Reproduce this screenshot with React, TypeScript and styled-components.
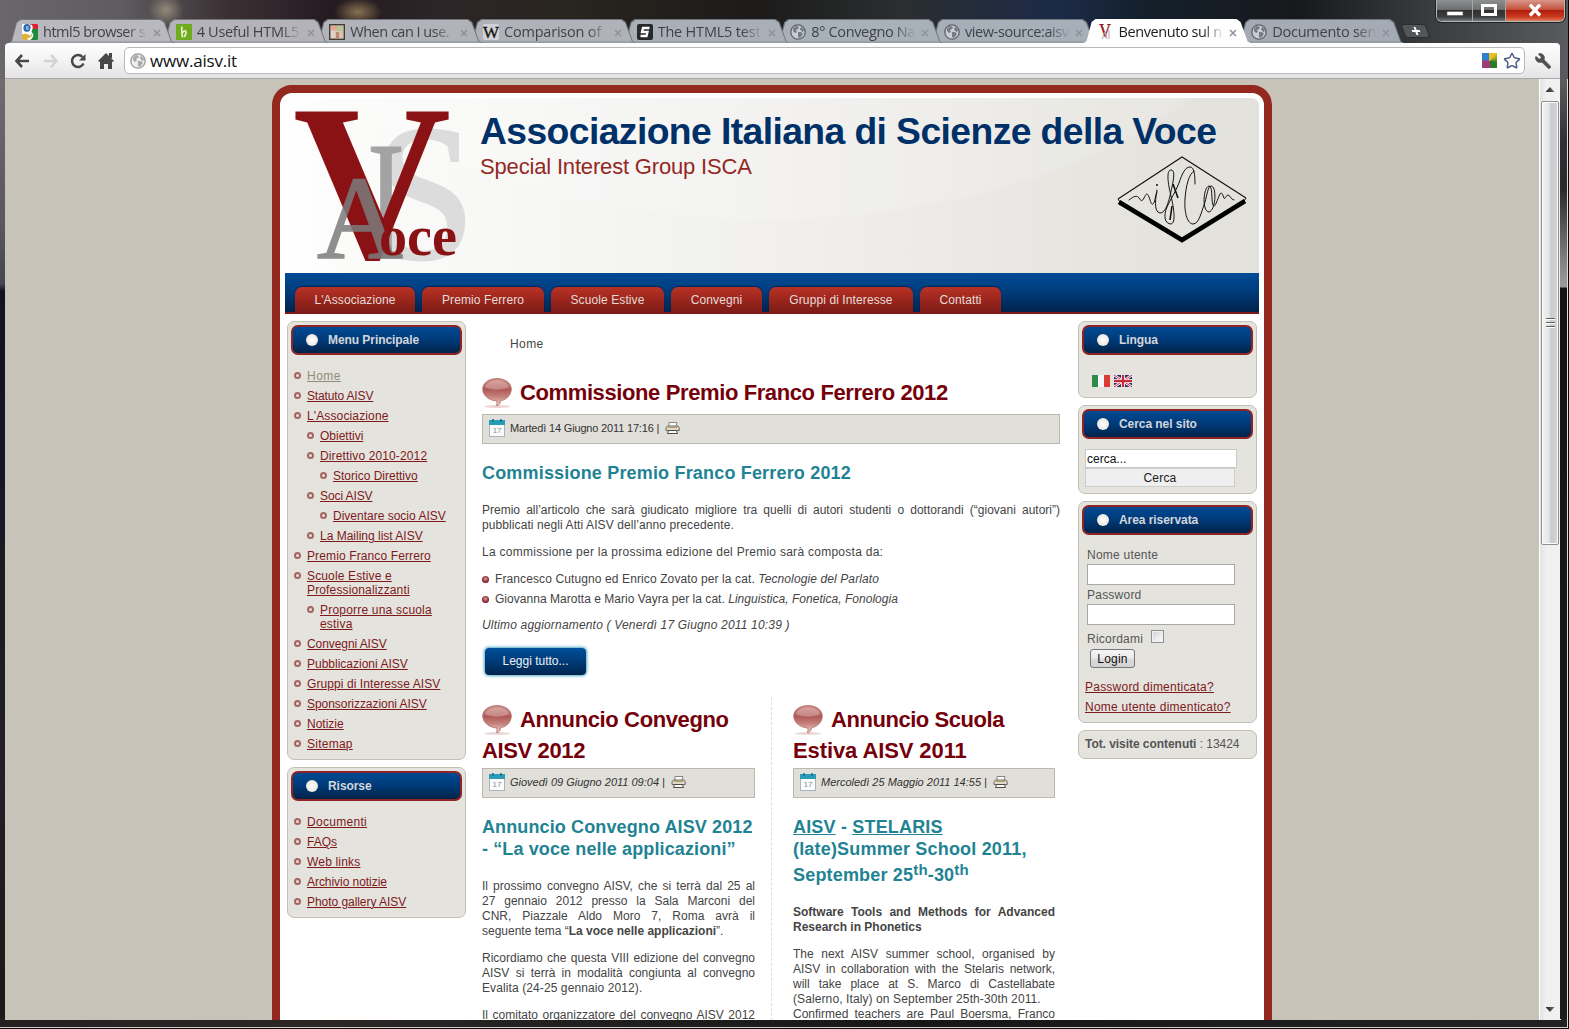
import React from "react";
import styled, { createGlobalStyle, css } from "styled-components";
import { Star, Wrench } from "lucide-react";

const Global = createGlobalStyle`
  *, *::before { box-sizing: border-box; }
  html, body { margin: 0; padding: 0; background: #000; overflow: hidden; }
  h1, h2, h3, p, ul { margin: 0; padding: 0; font-weight: inherit; }
  ul { list-style: none; }
  a { color: inherit; }
`;

const sans = `"Liberation Sans", Arial, sans-serif`;
const ui = `"Open Sans", "Noto Sans", sans-serif`;

/* ---------- browser window ---------- */

const Window = styled.div`
  position: relative;
  width: 1569px;
  height: 1029px;
  overflow: hidden;
  display: flex;
  flex-direction: column;
  font-family: ${sans};
  border: 1px solid #0a0a0a;
  border-width: 0 1px 1px 0;
  background:
    radial-gradient(ellipse 18px 16px at 166px 10px, rgba(190, 180, 150, 0.6), transparent),
    radial-gradient(ellipse 24px 14px at 358px 12px, rgba(200, 170, 110, 0.6), transparent),
    linear-gradient(90deg, #6a666a 0, #5f5b5f 120px, #3a3034 230px, #251a20 330px, #2c2528 440px, #29251f 560px, #1c1b1a 760px, #2a2e30 900px, #1c2a48 1060px, #14202c 1140px, #17191c 1300px, #3a3c3f 1430px, #5a5b5e 1569px);
`;

const TabStrip = styled.div`
  height: 43px;
  display: flex;
  align-items: flex-end;
  padding-left: 8px;
`;

const tabShape = css`
  clip-path: polygon(0 100%, 3px 92%, 8px 12%, 12px 0, calc(100% - 14px) 0, calc(100% - 10px) 12%, calc(100% - 3px) 94%, 100% 100%);
`;

const TabEdge = styled.div<{ $active?: boolean; $order: number }>`
  position: relative;
  z-index: ${(p) => (p.$active ? 30 : 20 - p.$order)};
  width: 167px;
  height: 24px;
  margin-right: -13.35px;
  flex: none;
  padding: 1px 1px 0;
  background: ${(p) => (p.$active ? "#fff" : "#70757b")};
  ${tabShape}
`;

const TabFace = styled.div<{ $active?: boolean; $tone: string }>`
  height: 100%;
  display: flex;
  align-items: center;
  padding: 0 11px 0 13px;
  background: ${(p) => (p.$active ? "linear-gradient(#fff, #fdfdfd)" : `linear-gradient(${p.$tone}, ${p.$tone} 88%, #90969d)`)};
  ${tabShape}
`;

const TabTitle = styled.span<{ $active?: boolean; $ls: number }>`
  flex: 1;
  margin-left: 5px;
  overflow: hidden;
  white-space: nowrap;
  font: 14.5px/20px ${ui};
  letter-spacing: ${(p) => p.$ls}px;
  color: ${(p) => (p.$active ? "#1c1c1c" : "#3f4347")};
  mask-image: linear-gradient(90deg, #000 80%, transparent 100%);
`;

const TabClose = styled.svg`
  flex: none;
  margin: 3px 2px 0 5px;
`;

const NewTab = styled.div`
  align-self: flex-end;
  margin: 0 0 5px 12px;
  width: 25px;
  height: 14px;
  transform: skewX(20deg);
  border-radius: 3px;
  background: #54575a;
  border: 1px solid #2a2c2e;
  display: flex;
  align-items: center;
  justify-content: center;
`;

const WindowButtons = styled.div`
  position: absolute;
  z-index: 40;
  top: 0;
  right: 3px;
  height: 22px;
  display: flex;
  border: 1px solid #b5b7b9;
  border-top: 0;
  border-radius: 0 0 6px 6px;
  overflow: hidden;
  box-shadow: 0 0 0 1px #222;
`;

const WinButton = styled.div<{ $w: number; $close?: boolean }>`
  width: ${(p) => p.$w}px;
  display: flex;
  align-items: center;
  justify-content: center;
  border-right: ${(p) => (p.$close ? "0" : "1px solid #a5a7a9")};
  background: ${(p) =>
    p.$close
      ? "linear-gradient(#d9968a, #c4523e 45%, #b01e0c 50%, #c93a1f 80%, #e08060)"
      : "linear-gradient(#8d8f91, #6d6f71 45%, #2f3133 50%, #3b3d3f 80%, #77797b)"};
`;

const Toolbar = styled.div`
  position: relative;
  z-index: 31;
  height: 36px;
  margin: 0 8px 0 5px;
  flex: none;
  display: flex;
  align-items: center;
  border-radius: 4px 4px 0 0;
  border-bottom: 1px solid #a9a9a9;
  background: linear-gradient(#fefefe, #f3f3f3 50%, #e4e4e4);
`;

const ToolIcon = styled.svg<{ $ml: number }>`
  margin-left: ${(p) => p.$ml}px;
  flex: none;
`;

const WrenchIcon = styled(Wrench)`
  flex: none;
  margin-left: 9px;
  transform: scaleX(-1);
`;

const Omnibox = styled.div`
  margin-left: 10px;
  width: 1401px;
  height: 27px;
  display: flex;
  align-items: center;
  padding: 0 3px 0 5px;
  background: #fff;
  border: 1px solid #b9b9b9;
  border-radius: 5px;
`;

const Url = styled.span`
  flex: 1;
  margin-left: 4px;
  font: 17px/22px ${ui};
  letter-spacing: -0.2px;
  color: #111;
`;

const Multicolor = styled.div`
  width: 15px;
  height: 15px;
  margin-right: 6px;
  background: conic-gradient(#e8c020 0 12%, #2f7a2a 30% 50%, #a03a78 50% 72%, #2f7fd0 78%);
`;

const Frame = styled.div`
  flex: 1;
  min-height: 0;
  display: flex;
  padding: 0 8px 8px 5px;
  background:
    linear-gradient(#eee, #eee) 5px calc(100% - 8px) / 1556px 1px no-repeat,
    linear-gradient(#cfcfcf, #cfcfcf) 0 calc(100% - 0px) / 100% 1px no-repeat,
    linear-gradient(90deg, transparent 1567px, #ddd 0),
    linear-gradient(90deg, #24201f, #2a2725 20%, #171717 60%, #222) 0 100% / 100% 9px no-repeat,
    linear-gradient(#5c5e60 0, #303234 60px, #2a2a2a 110px, #8b8b8b 190px, #9c9c9c 208px, #141414 209px, #1c1c1c) 100% 0 / 8px 100% no-repeat,
    linear-gradient(#6f6b6f, #59565c 150px, #454551 205px, #10131f 212px, #151824 400px, #231f24 700px, #1a1818) 0 0 / 5px 100% no-repeat;
`;

const Viewport = styled.div`
  flex: 1;
  min-width: 0;
  overflow: hidden;
  display: flex;
  justify-content: flex-start;
  align-items: flex-start;
  background: #c7c3b8;
`;

const Scrollbar = styled.div`
  width: 21px;
  display: flex;
  flex-direction: column;
  align-items: center;
  justify-content: space-between;
  padding-bottom: 8px;
  border-left: 1px solid #fff;
  background: linear-gradient(90deg, #e3e3e3, #f0f0f0 30%, #f1f1f1);
`;

const ScrollTop = styled.div`
  display: flex;
  flex-direction: column;
  align-items: center;
`;

const Arrow = styled.div<{ $down?: boolean }>`
  width: 9px;
  height: 5px;
  margin-top: ${(p) => (p.$down ? 0 : 8)}px;
  margin-bottom: ${(p) => (p.$down ? 0 : 9)}px;
  background: linear-gradient(90deg, #222, #777);
  clip-path: ${(p) => (p.$down ? "polygon(0 0, 100% 0, 50% 100%)" : "polygon(0 100%, 100% 100%, 50% 0)")};
`;

const Thumb = styled.div`
  width: 18px;
  height: 444px;
  display: flex;
  flex-direction: column;
  align-items: center;
  justify-content: center;
  gap: 2px;
  border: 1px solid #909090;
  border-radius: 2px;
  background: linear-gradient(90deg, #f4f4f4, #e4e4e6 45%, #c9cacd 55%, #d6d7da);
  box-shadow: inset 0 0 0 1px #fafafa;
`;

const Grip = styled.i`
  width: 9px;
  height: 2px;
  border-top: 1px solid #606060;
  border-bottom: 1px solid #fff;
`;

/* ---------- page ---------- */

const Page = styled.div`
  flex: none;
  width: 1000px;
  height: 1400px;
  margin: 6px 0 0 267px;
  padding: 5px 5px 0;
  background: #fff;
  border: 8px solid #93281f;
  border-radius: 20px;
  color: #444;
  font-size: 12px;
`;

const Header = styled.header`
  width: 974px;
  height: 175px;
  display: flex;
  border-radius: 6px 8px 0 0;
  background:
    radial-gradient(ellipse 551px 325px at 480px -200px, rgba(255, 255, 255, 0.14) 98%, transparent 100%),
    linear-gradient(90deg, #fff 0, #fbfbfa 60px, #f8f8f7 200px, #f0efed 520px, #e6e5e0 800px, #e2e1dc);
`;

const HeaderLogo = styled.svg`
  flex: none;
  width: 195px;
  height: 175px;
`;

const HeaderText = styled.div`
  flex: 1;
  position: relative;
  white-space: nowrap;
  padding-top: 11px;
`;

const SiteTitle = styled.h1`
  font: bold 37.3px/44px ${sans};
  letter-spacing: -0.6px;
  color: #003068;
`;

const SiteSub = styled.p`
  margin-top: 1px;
  font: 22px/26px ${sans};
  letter-spacing: -0.17px;
  color: #93281f;
`;

const IscaLogo = styled.svg`
  position: absolute;
  left: 636px;
  top: 56px;
  width: 132px;
  height: 92px;
`;

const Nav = styled.nav`
  width: 974px;
  height: 41px;
  display: flex;
  align-items: flex-end;
  gap: 7px;
  padding-left: 10px;
  border-bottom: 2px solid #7d1c17;
  background: linear-gradient(#004b97, #003f80 40%, #00234c);
`;

const NavTab = styled.a<{ $w: number }>`
  width: ${(p) => p.$w}px;
  height: 25px;
  border-radius: 7px 7px 0 0;
  background: linear-gradient(#b83226, #9c261d 50%, #7d1c17);
  box-shadow: 0 -1px 1px rgba(0, 20, 60, 0.6);
  color: #e4dcd8;
  text-align: center;
  font: 12px/26px ${sans};
  letter-spacing: 0.1px;
`;

const Columns = styled.div`
  display: flex;
  align-items: flex-start;
  padding: 7px 2px 0;
`;

const SideCol = styled.aside`
  width: 179px;
  flex: none;
  display: flex;
  flex-direction: column;
  gap: 7px;
`;

const Panel = styled.section<{ $h: number }>`
  height: ${(p) => p.$h}px;
  padding: 3px 3px 0;
  border: 1px solid #c3c1b2;
  border-radius: 7px;
  background: #e4e3de;
`;

const PanelHead = styled.h3`
  height: 30px;
  display: flex;
  align-items: center;
  gap: 10px;
  padding-left: 13px;
  border: 2px solid #8e2524;
  border-radius: 7px;
  background: linear-gradient(#004a93, #003a78 50%, #002348);
  color: #d3d6db;
  font: bold 12px/24px ${sans};
  letter-spacing: -0.06px;
  &::before {
    content: "";
    width: 12px;
    height: 12px;
    border-radius: 50%;
    background: radial-gradient(#fff, #efece6 60%, #c0c6cc);
  }
`;

const MenuList = styled.ul`
  padding-top: 11px;
`;

const MenuItem = styled.li<{ $level: number; $muted?: boolean }>`
  display: flex;
  align-items: flex-start;
  padding: 3px 0 3px ${(p) => 3 + p.$level * 13}px;
  color: ${(p) => (p.$muted ? "#8d8d77" : "#7e1a1a")};
  font: 12px/14px ${sans};
  white-space: nowrap;
  &::before {
    content: "";
    flex: none;
    width: 7px;
    height: 7px;
    margin: 3px 6px 0 0;
    border: 2px solid #a4645f;
    border-radius: 50%;
    background: #e9dedb;
  }
`;

const MenuLink = styled.a<{ $ls: number }>`
  letter-spacing: ${(p) => p.$ls}px;
  text-decoration: underline;
  text-decoration-thickness: 1px;
  text-underline-offset: 1px;
`;

const Main = styled.main`
  width: 578px;
  flex: none;
  margin: 0 18px 0 16px;
  font: 12px/15px ${sans};
`;

const Crumb = styled.div`
  padding: 16px 0 0 28px;
  letter-spacing: 0.4px;
`;

const ArticleTitle = styled.h2<{ $mt: number; $mb: number; $ls: number }>`
  margin: ${(p) => p.$mt}px 0 ${(p) => p.$mb}px;
  font: bold 22px/31px ${sans};
  letter-spacing: ${(p) => p.$ls}px;
  color: #75000a;
  white-space: nowrap;
`;

const TitleTail = styled.span<{ $ls: number }>`
  display: block;
  letter-spacing: ${(p) => p.$ls}px;
`;

const Balloon = styled.svg`
  width: 30px;
  height: 31px;
  margin-right: 8px;
  vertical-align: top;
`;

const Meta = styled.div<{ $italic?: boolean; $ls?: number }>`
  height: 30px;
  display: flex;
  align-items: center;
  padding: 0 0 2px 6px;
  border: 1px solid #bdb9ac;
  background: #e1dfd9;
  color: #333;
  font: ${(p) => (p.$italic ? "italic" : "normal")} 11px/26px ${sans};
  letter-spacing: ${(p) => p.$ls ?? 0}px;
  white-space: nowrap;
  svg { flex: none; }
`;

const MetaText = styled.span`
  margin: 0 6px 0 5px;
`;

const SubTitle = styled.h3<{ $mt: number; $ls?: number }>`
  margin: ${(p) => p.$mt}px 0 19px;
  font: bold 18px/22px ${sans};
  letter-spacing: ${(p) => p.$ls ?? 0.18}px;
  color: #1f8394;
  white-space: nowrap;
  sup { font-size: 15px; line-height: 1; vertical-align: 6px; }
`;

const RaisedLine = styled.span`
  display: block;
  padding-top: 2px;
`;

const Para = styled.p`
  margin-bottom: 12px;
`;

const Line = styled.span<{ $just?: boolean; $ls?: number }>`
  display: block;
  white-space: nowrap;
  text-align: left;
  letter-spacing: ${(p) => p.$ls ?? 0}px;
  ${(p) => p.$just && css`
    white-space: normal;
    text-align: justify;
    text-align-last: justify;
  `}
`;

const Bullets = styled.ul`
  margin: -3px 0 9px;
`;

const Bullet = styled.li<{ $ls: number }>`
  display: flex;
  align-items: center;
  height: 20px;
  white-space: nowrap;
  letter-spacing: ${(p) => p.$ls}px;
  &::before {
    content: "";
    width: 7px;
    height: 7px;
    margin-right: 6px;
    border-radius: 50%;
    background: radial-gradient(circle at 50% 40%, #e0a0a0, #7d1c20 65%);
  }
`;

const ReadMore = styled.a`
  display: block;
  width: 101px;
  height: 27px;
  margin: 15px 0 22px 3px;
  border-radius: 4px;
  background: linear-gradient(#00509a, #003a78 50%, #00254d);
  box-shadow: 0 0 3px 1px #4fa6c4;
  color: #eef1f5;
  text-align: center;
  font: 12px/27px ${sans};
`;

const Split = styled.div`
  display: flex;
`;

const Half = styled.article<{ $w: number; $first?: boolean }>`
  width: ${(p) => p.$w}px;
  flex: none;
  ${(p) => p.$first && css`
    padding-right: 16px;
    margin-right: 21px;
    height: 700px;
    border-right: 1px dashed #dfddd6;
  `}
`;

const Flags = styled.div`
  display: flex;
  gap: 4px;
  padding: 20px 0 0 10px;
`;

const SearchForm = styled.div`
  display: flex;
  flex-direction: column;
  padding: 10px 0 0 3px;
`;

const SearchInput = styled.div`
  width: 152px;
  height: 19px;
  padding-left: 1px;
  border: 1px solid #c9c9c4;
  background: #fff;
  color: #111;
  font: 12px/18px ${sans};
`;

const SearchButton = styled.div`
  width: 150px;
  height: 19px;
  border: 1px solid #cfcfc9;
  background: #efefef;
  color: #222;
  text-align: center;
  font: 12px/18px ${sans};
  letter-spacing: 0.2px;
`;

const LoginForm = styled.div`
  display: flex;
  flex-direction: column;
  padding: 11px 0 0 5px;
  font: 12px/18px ${sans};
  letter-spacing: 0.23px;
  color: #555;
`;

const Field = styled.div`
  width: 148px;
  height: 21px;
  margin-bottom: 1px;
  border: 1px solid #a7a7a7;
  background: #fff;
`;

const Remember = styled.div`
  display: flex;
  gap: 8px;
  height: 23px;
  padding-top: 4px;
`;

const Check = styled.div`
  width: 13px;
  height: 13px;
  border: 1px solid #8f8f8f;
  background: linear-gradient(135deg, #d0d0d0, #fff);
  box-shadow: inset 0 0 0 1px #f0f0f0;
`;

const LoginButton = styled.div`
  width: 45px;
  height: 19px;
  margin: 0 0 9px 3px;
  border: 1px solid #777;
  border-radius: 3px;
  background: linear-gradient(#f5f5f5, #ececec 48%, #dcdcdc 52%, #d2d2d2);
  color: #111;
  text-align: center;
  font: 12px/18px ${sans};
`;

const FormLink = styled.a`
  margin-left: -2px;
  color: #7e1a1a;
  font: 12px/20px ${sans};
  text-decoration: underline;
  text-underline-offset: 1px;
  text-decoration-thickness: 1px;
`;

const Visits = styled.div`
  padding-left: 3px;
  font: 12px/21px ${sans};
  color: #555;
  letter-spacing: -0.05px;
`;

/* ---------- drawings ---------- */

const GlobeIcon = ({ light }: { light?: boolean }) => (
  <svg width="16" height="16" viewBox="0 0 16 16">
    <circle cx="8" cy="8" r="7.2" fill={light ? "#eceded" : "#c9ced3"} stroke={light ? "#999" : "#5d6268"} strokeWidth="1.3" />
    <path d="M3 4.5L6 2l3 1-1 2-2 1 1 2-2 1-2-2zM8 8l3 0 2 2-3 4-2-1zM11 2.5l3 3-1 3-3-3z" fill={light ? "#aaa" : "#777c82"} />
  </svg>
);

const GoogleIcon = () => (
  <svg width="16" height="16" viewBox="0 0 16 16">
    <rect width="16" height="16" rx="1" fill="#fff" />
    <path d="M8 0h7a1 1 0 0 1 1 1v4H9z" fill="#d8232a" />
    <path d="M10 5h6v10a1 1 0 0 1-1 1H8z" fill="#1e8a3c" />
    <path d="M0 10l3-1 6 3 0 4H1a1 1 0 0 1-1-1z" fill="#e0b23a" />
    <ellipse cx="5" cy="4" rx="3.6" ry="4" fill="#2b66b8" />
    <ellipse cx="5.3" cy="4" rx="1.6" ry="2.2" fill="#7fb0e0" />
    <path d="M8.5 1c2.5 2 1.500 4 0 5.500s2.500 2.500 2 5-3 3.500-5 3.500" fill="none" stroke="#fff" strokeWidth="1.7" />
    <path d="M1 9.5c2-1.500 4-1 6-1" fill="none" stroke="#fff" strokeWidth="1.6" />
  </svg>
);

const HIcon = () => (
  <svg width="16" height="16" viewBox="0 0 16 16">
    <rect width="16" height="16" fill="#6faa1f" />
    <path d="M6 2.5c-1 4 0 7 .5 11M6.5 9c1-3 4-3 3.5 0-.3 2-1 3-2 4" fill="none" stroke="#e8f5cf" strokeWidth="1.6" />
  </svg>
);

const CanIcon = () => (
  <svg width="16" height="16" viewBox="0 0 16 16">
    <rect x=".7" y=".7" width="14.6" height="14.6" fill="#d9c3b0" stroke="#3b3530" strokeWidth="1.3" />
    <path d="M2 2h6v4H2z" fill="#e7a58e" /><path d="M8 2h6v5H8z" fill="#b4c79a" />
    <path d="M2 7h4v7H2z" fill="#e0d5c5" /><path d="M7 8h3v6H7z" fill="#b98a6f" />
  </svg>
);

const WikiIcon = () => (
  <svg width="16" height="16" viewBox="0 0 16 16">
    <rect width="16" height="16" rx="2" fill="#d0d2d5" />
    <text x="0" y="13.5" textLength="16" lengthAdjust="spacingAndGlyphs" fontFamily="Liberation Serif, serif" fontSize="17" fill="#111" stroke="#111" strokeWidth=".3">W</text>
  </svg>
);

const FiveIcon = () => (
  <svg width="16" height="16" viewBox="0 0 16 16">
    <rect width="16" height="16" rx="2" fill="#26292c" />
    <path d="M12.5 4H6L5 8h5.500L9.500 12H3.500" fill="none" stroke="#fff" strokeWidth="2.3" />
  </svg>
);

const VIcon = () => (
  <svg width="16" height="16" viewBox="0 0 16 16">
    <text x="1" y="13" fontFamily="Liberation Serif, serif" fontSize="18" fill="#8a1416" stroke="#8a1416" strokeWidth=".3" textLength="12" lengthAdjust="spacingAndGlyphs">V</text>
    <path d="M4 15l3-7 2 7M11 6v9" stroke="#b9a0a0" fill="none" />
  </svg>
);

const BalloonIcon = ({ id }: { id: string }) => (
  <Balloon viewBox="0 0 30 31">
    <defs>
      <linearGradient id={id} x1="0" y1="0" x2="0" y2="1">
        <stop offset="0" stopColor="#cf8f8a" />
        <stop offset=".4" stopColor="#b05a57" />
        <stop offset=".65" stopColor="#c47f79" />
        <stop offset="1" stopColor="#f3d2cb" />
      </linearGradient>
    </defs>
    <ellipse cx="15" cy="29.5" rx="13" ry="1.5" fill="#d0a0a0" opacity=".45" />
    <path d="M15 1.500C23 1.500 29.300 6 29.300 12c0 5.500-4.300 10.500-9.800 11.500l-1 .5c0 2.500-1.500 4-3.500 5l-.5-1c.8-1.500.6-2.500.2-4C7 23.500 .7 18.500 .7 12 .7 6 7 1.500 15 1.500z" fill={`url(#${id})`} stroke="#b0706c" strokeWidth=".8" />
    <path d="M15 3.500C21 3.500 26 6 27 10 20 13.500 10 13.500 3 10 4.500 6 9 3.500 15 3.500z" fill="#fff" opacity=".25" />
  </Balloon>
);

const CalendarIcon = () => (
  <svg width="16" height="18" viewBox="0 0 16 18">
    <rect x=".5" y="2" width="15" height="15.5" fill="#fbfbfb" stroke="#a9b4ba" />
    <rect x="0" y="1" width="16" height="5" fill="#2a9cb8" />
    <path d="M4 0v3M12 0v3" stroke="#1a6f86" strokeWidth="1.5" />
    <text x="8" y="14" textAnchor="middle" fontFamily="Liberation Sans, sans-serif" fontStyle="normal" fontSize="8" fill="#8a9298">17</text>
  </svg>
);

const PrinterIcon = () => (
  <svg width="15" height="14" viewBox="0 0 15 14">
    <path d="M4 5V1.500h8L11 5" fill="#fff" stroke="#888" />
    <path d="M2.500 5h10.500l1.200 1.800v2.700H1V6.800z" fill="#dedad0" stroke="#6b665a" />
    <path d="M3 6.500h9" stroke="#b99a50" />
    <path d="M3.500 9.500h8l1 3h-10z" fill="#fafafa" stroke="#4c4a44" />
  </svg>
);

const CloseX = () => (
  <TabClose width="8" height="8" viewBox="0 0 8 8">
    <path d="M1 1l6 6M7 1L1 7" stroke="#8d9298" strokeWidth="1.5" />
  </TabClose>
);

const tabs: { icon: React.ReactNode; title: string; tone: string; active?: boolean; ls: number }[] = [
  { icon: <GoogleIcon />, title: "html5 browser s", tone: "#b9b8bf", ls: -0.5 },
  { icon: <HIcon />, title: "4 Useful HTML5", tone: "#b4b3ba", ls: -0.3 },
  { icon: <CanIcon />, title: "When can I use.", tone: "#b2b3ba", ls: -0.5 },
  { icon: <WikiIcon />, title: "Comparison of", tone: "#afb2b8", ls: -0.2 },
  { icon: <FiveIcon />, title: "The HTML5 test", tone: "#a9afb7", ls: -0.2 },
  { icon: <GlobeIcon />, title: "8° Convegno Na", tone: "#a9b1b8", ls: -0.35 },
  { icon: <GlobeIcon />, title: "view-source:aisv", tone: "#a7b0b9", ls: -0.4 },
  { icon: <VIcon />, title: "Benvenuto sul n", tone: "#fff", active: true, ls: -0.42 },
  { icon: <GlobeIcon />, title: "Documento sen", tone: "#a5abb4", ls: -0.25 },
];

const navTabs: [string, number][] = [
  ["L'Associazione", 120],
  ["Premio Ferrero", 122],
  ["Scuole Estive", 113],
  ["Convegni", 91],
  ["Gruppi di Interesse", 144],
  ["Contatti", 81],
];

type Entry = { lines: string[]; level?: number; muted?: boolean; ls?: number };

const mainMenu: Entry[] = [
  { lines: ["Home"], muted: true, ls: 0.5 },
  { lines: ["Statuto AISV"], ls: -0.15 },
  { lines: ["L'Associazione"], ls: 0.13 },
  { lines: ["Obiettivi"], level: 1 },
  { lines: ["Direttivo 2010-2012"], level: 1, ls: 0.13 },
  { lines: ["Storico Direttivo"], level: 2 },
  { lines: ["Soci AISV"], level: 1, ls: -0.1 },
  { lines: ["Diventare socio AISV"], level: 2 },
  { lines: ["La Mailing list AISV"], level: 1 },
  { lines: ["Premio Franco Ferrero"], ls: 0.12 },
  { lines: ["Scuole Estive e", "Professionalizzanti"], ls: 0.14 },
  { lines: ["Proporre una scuola", "estiva"], level: 1, ls: 0.2 },
  { lines: ["Convegni AISV"], ls: -0.08 },
  { lines: ["Pubblicazioni AISV"] },
  { lines: ["Gruppi di Interesse AISV"], ls: 0.08 },
  { lines: ["Sponsorizzazioni AISV"], ls: -0.05 },
  { lines: ["Notizie"] },
  { lines: ["Sitemap"], ls: 0.25 },
];

const resources: Entry[] = [
  { lines: ["Documenti"], ls: 0.3 },
  { lines: ["FAQs"] },
  { lines: ["Web links"], ls: 0.18 },
  { lines: ["Archivio notizie"], ls: -0.05 },
  { lines: ["Photo gallery AISV"], ls: -0.05 },
];

const Menu = ({ entries }: { entries: Entry[] }) => (
  <MenuList>
    {entries.map((e) => (
      <MenuItem key={e.lines[0]} $level={e.level ?? 0} $muted={e.muted}>
        <MenuLink $ls={e.ls ?? 0}>
          {e.lines.map((l, i) => (
            <React.Fragment key={l}>
              {i > 0 && <br />}
              {l}
            </React.Fragment>
          ))}
        </MenuLink>
      </MenuItem>
    ))}
  </MenuList>
);

const Logo = () => (
  <HeaderLogo viewBox="0 0 195 175">
    <g fontFamily="Liberation Serif, serif">
      <text x="89" y="160" fontSize="192" fill="#dcdcdc" stroke="#dcdcdc" strokeWidth="3" textLength="101" lengthAdjust="spacingAndGlyphs">S</text>
      <text x="82" y="160" fontSize="169" fill="#a3a3a3" stroke="#a3a3a3" strokeWidth="1" textLength="38" lengthAdjust="spacingAndGlyphs">I</text>
      <text x="8" y="160" fontSize="223" fontWeight="bold" fill="#8a1214" textLength="158" lengthAdjust="spacingAndGlyphs">V</text>
      <g opacity=".85">
        <text x="32" y="160" fontSize="118" fill="#7c7c7c" stroke="#7c7c7c" strokeWidth="1.5" textLength="86" lengthAdjust="spacingAndGlyphs">A</text>
      </g>
      <text x="94" y="157" fontSize="57" fontWeight="bold" fill="#8a1214" textLength="78" lengthAdjust="spacingAndGlyphs">oce</text>
    </g>
  </HeaderLogo>
);

const Isca = () => (
  <IscaLogo viewBox="0 0 132 92">
    <path d="M2 45L66 3l64 41" fill="none" stroke="#111" strokeWidth="1.1" />
    <path d="M2 45l2 3M130 44l-2 3" fill="none" stroke="#111" strokeWidth="1" />
    <path d="M3 48l63 38 63-39" fill="none" stroke="#000" strokeWidth="4.8" />
    <g fill="none" stroke="#111" strokeWidth="1" strokeLinecap="round">
      <path d="M13 46c5-4 8-5 10-2s3 4 5 0 3-6 5-1 2 8 4 7 2-8 4-12" />
      <path d="M41 36c-1 6-4 22 3 23 6 0 9-12 12-26 2-10 3-17-1-17-5 0-3 14 0 26 3 13 5 27 0 28-6 0-8-8-4-17 3-7 9-16 12-24 3-9 6-16 11-16 4 0 5 7 5 17" />
      <path d="M78 17c-5 3-8 14-9 28-1 15 3 25 8 25 6 0 8-11 12-22 2-7 3-16 6-16 6 0 5 24-2 26-7 0-6-25 0-26 4 0 2 14 4 19 2 4 4-5 7-11 2-3 3 2 4 4s2-3 4-3 3 5 6 5" />
    </g>
    <path d="M57 30l5 14M56 52l-2 14" stroke="#111" strokeWidth="1.6" />
    <circle cx="41" cy="31" r="1" fill="#111" />
  </IscaLogo>
);

export default function App() {
  return (
    <>
      <Global />
      <Window>
        <TabStrip>
          {tabs.map((t, i) => (
            <TabEdge key={t.title} $active={t.active} $order={i}>
              <TabFace $active={t.active} $tone={t.tone}>
                {t.icon}
                <TabTitle $active={t.active} $ls={t.ls}>{t.title}</TabTitle>
                <CloseX />
              </TabFace>
            </TabEdge>
          ))}
          <NewTab>
            <svg width="10" height="10" viewBox="0 0 10 10">
              <path d="M5 1v8M1 5h8" stroke="#fff" strokeWidth="2" />
            </svg>
          </NewTab>
        </TabStrip>
        <WindowButtons>
          <WinButton $w={36}>
            <svg width="18" height="14" viewBox="0 0 18 14"><rect x="1" y="7.5" width="16" height="4" fill="#fff" stroke="#555" strokeWidth=".6" /></svg>
          </WinButton>
          <WinButton $w={33}>
            <svg width="18" height="14" viewBox="0 0 18 14"><rect x="2.5" y="1.5" width="13" height="9" fill="none" stroke="#fff" strokeWidth="3" /></svg>
          </WinButton>
          <WinButton $w={58} $close>
            <svg width="16" height="14" viewBox="0 0 16 14"><path d="M3 .5l10 11M13 .5L3 11.5" stroke="#fff" strokeWidth="3.4" /></svg>
          </WinButton>
        </WindowButtons>

        <Toolbar>
          <ToolIcon $ml={9} width="16" height="16" viewBox="0 0 16 16">
            <path d="M8 2L2.5 8 8 14M3 8h12" fill="none" stroke="#484848" strokeWidth="2.6" />
          </ToolIcon>
          <ToolIcon $ml={13} width="16" height="16" viewBox="0 0 16 16">
            <path d="M8 2l5.5 6L8 14M13 8H1" fill="none" stroke="#d2d2d2" strokeWidth="2.4" />
          </ToolIcon>
          <ToolIcon $ml={11} width="17" height="16" viewBox="0 0 17 16">
            <path d="M13.5 10.5A6 6 0 1 1 12.5 4" fill="none" stroke="#484848" strokeWidth="2.5" />
            <path d="M15.5 1v6.5H9z" fill="#484848" />
          </ToolIcon>
          <ToolIcon $ml={11} width="16" height="16" viewBox="0 0 16 16">
            <path d="M8 0l8 8-1.500 1L14 8.500V16h-4v-5H6v5H2V8.500L1.500 9 0 8z" fill="#484848" />
            <path d="M11 0h3v5h-3z" fill="#484848" />
          </ToolIcon>
          <Omnibox>
            <GlobeIcon light />
            <Url>www.aisv.it</Url>
            <Multicolor />
            <Star size={18} color="#4d5f80" strokeWidth={2} />
          </Omnibox>
          <WrenchIcon size={18} color="#505050" fill="#505050" strokeWidth={1} />
        </Toolbar>

        <Frame>
          <Viewport>
            <Page>
              <Header>
                <Logo />
                <HeaderText>
                  <SiteTitle>Associazione Italiana di Scienze della Voce</SiteTitle>
                  <SiteSub>Special Interest Group ISCA</SiteSub>
                  <Isca />
                </HeaderText>
              </Header>
              <Nav>
                {navTabs.map(([label, w]) => (
                  <NavTab key={label} $w={w}>{label}</NavTab>
                ))}
              </Nav>
              <Columns>
                <SideCol>
                  <Panel $h={439}>
                    <PanelHead>Menu Principale</PanelHead>
                    <Menu entries={mainMenu} />
                  </Panel>
                  <Panel $h={151}>
                    <PanelHead>Risorse</PanelHead>
                    <Menu entries={resources} />
                  </Panel>
                </SideCol>

                <Main>
                  <Crumb>Home</Crumb>
                  <ArticleTitle $mt={25} $mb={6} $ls={-0.39}>
                    <BalloonIcon id="b1" />Commissione Premio Franco Ferrero 2012
                  </ArticleTitle>
                  <Meta $ls={-0.17}>
                    <CalendarIcon />
                    <MetaText>Martedì 14 Giugno 2011 17:16 |</MetaText>
                    <PrinterIcon />
                  </Meta>
                  <SubTitle $mt={18}>Commissione Premio Franco Ferrero 2012</SubTitle>
                  <Para>
                    <Line $just>Premio all’articolo che sarà giudicato migliore tra quelli di autori studenti o dottorandi (“giovani autori”)</Line>
                    <Line $ls={0.09}>pubblicati negli Atti AISV dell’anno precedente.</Line>
                  </Para>
                  <Para>
                    <Line $ls={0.27}>La commissione per la prossima edizione del Premio sarà composta da:</Line>
                  </Para>
                  <Bullets>
                    <Bullet $ls={0.11}><span>Francesco Cutugno ed Enrico Zovato per la cat. <em>Tecnologie del Parlato</em></span></Bullet>
                    <Bullet $ls={0.03}><span>Giovanna Marotta e Mario Vayra per la cat. <em>Linguistica, Fonetica, Fonologia</em></span></Bullet>
                  </Bullets>
                  <Line $ls={0.18}><em>Ultimo aggiornamento ( Venerdì 17 Giugno 2011 10:39 )</em></Line>
                  <ReadMore>Leggi tutto...</ReadMore>
                  <Split>
                    <Half $w={290} $first>
                      <ArticleTitle $mt={7} $mb={2} $ls={-0.38}>
                        <BalloonIcon id="b2" />Annuncio Convegno
                        <TitleTail $ls={-0.38}>AISV 2012</TitleTail>
                      </ArticleTitle>
                      <Meta $italic>
                        <CalendarIcon />
                        <MetaText>Giovedì 09 Giugno 2011 09:04 |</MetaText>
                        <PrinterIcon />
                      </Meta>
                      <SubTitle $mt={18} $ls={0.12}>Annuncio Convegno AISV 2012<br />- “La voce nelle applicazioni”</SubTitle>
                      <Para>
                        <Line $just>Il prossimo convegno AISV, che si terrà dal 25 al</Line>
                        <Line $just>27 gennaio 2012 presso la Sala Marconi del</Line>
                        <Line $just>CNR, Piazzale Aldo Moro 7, Roma avrà il</Line>
                        <Line>seguente tema “<b>La voce nelle applicazioni</b>”.</Line>
                      </Para>
                      <Para>
                        <Line $just>Ricordiamo che questa VIII edizione del convegno</Line>
                        <Line $just>AISV si terrà in modalità congiunta al convegno</Line>
                        <Line $ls={0.1}>Evalita (24-25 gennaio 2012).</Line>
                      </Para>
                      <Para>
                        <Line $just>Il comitato organizzatore del convegno AISV 2012</Line>
                      </Para>
                    </Half>
                    <Half $w={262}>
                      <ArticleTitle $mt={7} $mb={2} $ls={-0.45}>
                        <BalloonIcon id="b3" />Annuncio Scuola
                        <TitleTail $ls={-0.1}>Estiva AISV 2011</TitleTail>
                      </ArticleTitle>
                      <Meta $italic>
                        <CalendarIcon />
                        <MetaText>Mercoledì 25 Maggio 2011 14:55 |</MetaText>
                        <PrinterIcon />
                      </Meta>
                      <SubTitle $mt={18}>
                        <u>AISV</u> - <u>STELARIS</u><br />(late)Summer School 2011,
                        <RaisedLine>September 25<sup>th</sup>-30<sup>th</sup></RaisedLine>
                      </SubTitle>
                      <Para>
                        <Line $just><b>Software Tools and Methods for Advanced</b></Line>
                        <Line><b>Research in Phonetics</b></Line>
                      </Para>
                      <Para>
                        <Line $just>The next AISV summer school, organised by</Line>
                        <Line $just>AISV in collaboration with the Stelaris network,</Line>
                        <Line $just>will take place at S. Marco di Castellabate</Line>
                        <Line $ls={0.1}>(Salerno, Italy) on September 25th-30th 2011.</Line>
                        <Line $just>Confirmed teachers are Paul Boersma, Franco</Line>
                      </Para>
                    </Half>
                  </Split>
                </Main>

                <SideCol>
                  <Panel $h={77}>
                    <PanelHead>Lingua</PanelHead>
                    <Flags>
                      <svg width="18" height="12" viewBox="0 0 18 12">
                        <rect width="6" height="12" fill="#2f8a4a" /><rect x="6" width="6" height="12" fill="#f6f6f6" /><rect x="12" width="6" height="12" fill="#dc3a34" />
                      </svg>
                      <svg width="18" height="12" viewBox="0 0 18 12">
                        <rect width="18" height="12" fill="#2b2f6e" />
                        <path d="M0 0l18 12M18 0L0 12" stroke="#fff" strokeWidth="2.6" />
                        <path d="M0 0l18 12M18 0L0 12" stroke="#c8283a" strokeWidth="1" />
                        <path d="M9 0v12M0 6h18" stroke="#fff" strokeWidth="4" />
                        <path d="M9 0v12M0 6h18" stroke="#c8283a" strokeWidth="2.3" />
                      </svg>
                    </Flags>
                  </Panel>
                  <Panel $h={89}>
                    <PanelHead>Cerca nel sito</PanelHead>
                    <SearchForm>
                      <SearchInput>cerca...</SearchInput>
                      <SearchButton>Cerca</SearchButton>
                    </SearchForm>
                  </Panel>
                  <Panel $h={222}>
                    <PanelHead>Area riservata</PanelHead>
                    <LoginForm>
                      <span>Nome utente</span>
                      <Field />
                      <span>Password</span>
                      <Field />
                      <Remember>
                        <span>Ricordami</span>
                        <Check />
                      </Remember>
                      <LoginButton>Login</LoginButton>
                      <FormLink>Password dimenticata?</FormLink>
                      <FormLink>Nome utente dimenticato?</FormLink>
                    </LoginForm>
                  </Panel>
                  <Panel $h={29}>
                    <Visits><b>Tot. visite contenuti</b> : 13424</Visits>
                  </Panel>
                </SideCol>
              </Columns>
            </Page>
          </Viewport>
          <Scrollbar>
            <ScrollTop>
              <Arrow />
              <Thumb><Grip /><Grip /><Grip /></Thumb>
            </ScrollTop>
            <Arrow $down />
          </Scrollbar>
        </Frame>
      </Window>
    </>
  );
}
